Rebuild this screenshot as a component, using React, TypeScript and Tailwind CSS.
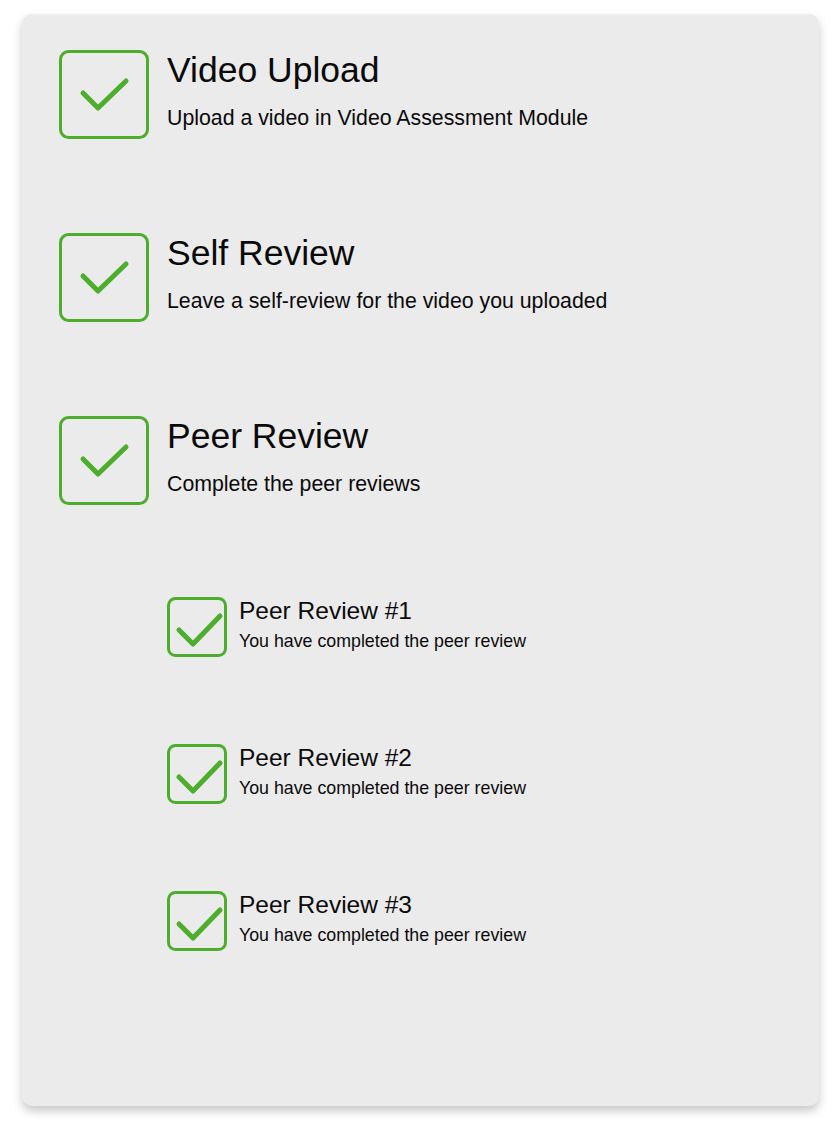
import React from "react";

const GREEN = "#4cae2c";

function BigCheck() {
  return (
    <svg width="90" height="89" viewBox="0 0 90 89" className="shrink-0">
      <rect x="1.5" y="1.5" width="87" height="86" rx="8" fill="none" stroke={GREEN} strokeWidth="3" />
      <polyline points="24,43 39,58 67,31" fill="none" stroke={GREEN} strokeWidth="5" strokeLinecap="round" strokeLinejoin="round" />
    </svg>
  );
}

function SmallCheck() {
  return (
    <svg width="60" height="60" viewBox="0 0 60 60" className="shrink-0">
      <rect x="1.5" y="1.5" width="57" height="57" rx="7" fill="none" stroke={GREEN} strokeWidth="3" />
      <polyline points="12,33 26,47 53,19" fill="none" stroke={GREEN} strokeWidth="5" strokeLinecap="round" strokeLinejoin="round" />
    </svg>
  );
}

function BigItem({ title, desc }: { title: string; desc: string }) {
  return (
    <div className="flex items-start gap-[18px]">
      <BigCheck />
      <div className="flex flex-col">
        <div className="mt-[0px] text-[35.5px] leading-[40px] text-[#0a0a0a]">{title}</div>
        <div className="mt-[14px] text-[21.3px] leading-[28px] text-[#0a0a0a]">{desc}</div>
      </div>
    </div>
  );
}

function SmallItem({ title, desc }: { title: string; desc: string }) {
  return (
    <div className="flex items-start gap-[12px]">
      <SmallCheck />
      <div className="flex flex-col">
        <div className="text-[24.5px] leading-[28px] text-[#0a0a0a]">{title}</div>
        <div className="mt-[5px] text-[17.8px] leading-[22px] text-[#0a0a0a]">{desc}</div>
      </div>
    </div>
  );
}

export default function App() {
  return (
    <div
      className="min-h-screen bg-white pt-[14px] pl-[22px]"
      style={{ fontFamily: '"Liberation Sans", Arial, sans-serif' }}
    >
      <div className="w-[797px] h-[1092px] rounded-[10px] bg-[#ebebeb] pl-[37px] pt-[36px] shadow-[0_5px_10px_rgba(0,0,0,0.22)]">
        <div className="flex flex-col gap-[94px]">
          <BigItem title="Video Upload" desc="Upload a video in Video Assessment Module" />
          <BigItem title="Self Review" desc="Leave a self-review for the video you uploaded" />
          <BigItem title="Peer Review" desc="Complete the peer reviews" />
        </div>
        <div className="ml-[108px] mt-[92px] flex flex-col gap-[87px]">
          <SmallItem title="Peer Review #1" desc="You have completed the peer review" />
          <SmallItem title="Peer Review #2" desc="You have completed the peer review" />
          <SmallItem title="Peer Review #3" desc="You have completed the peer review" />
        </div>
      </div>
    </div>
  );
}
